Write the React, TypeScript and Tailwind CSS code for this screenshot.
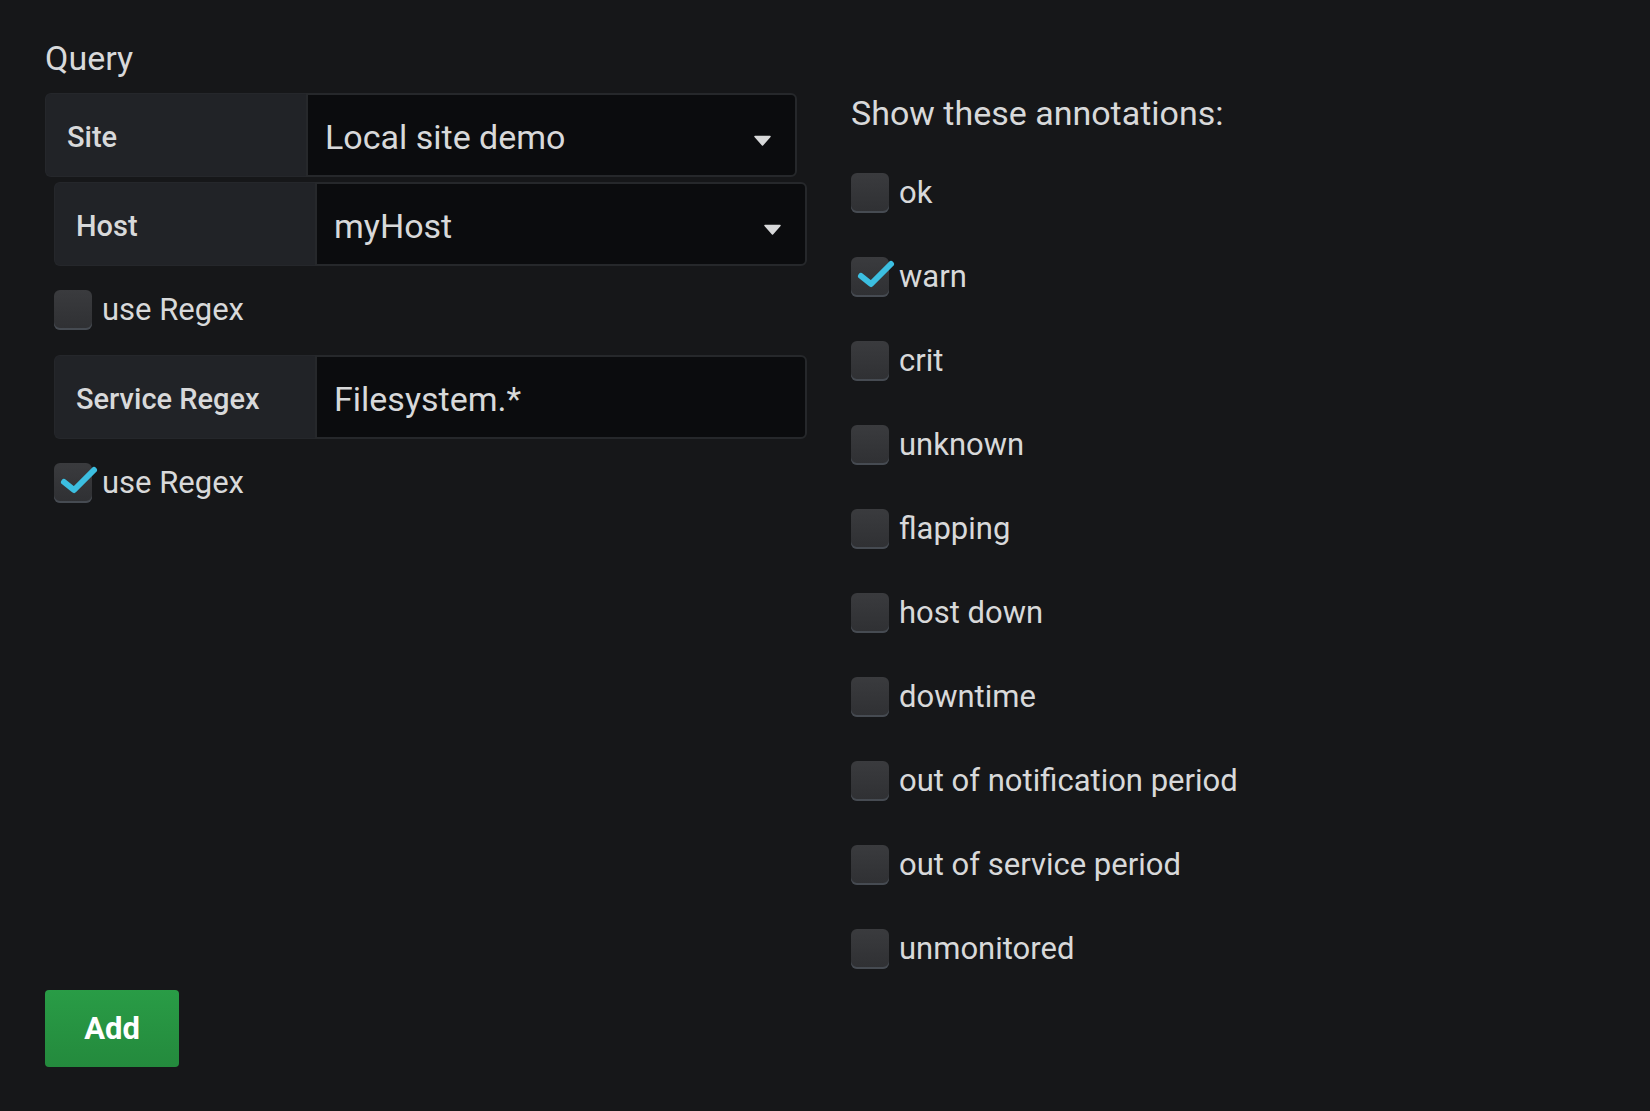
import React from "react";

function Box({ checked }: { checked?: boolean }) {
  return (
    <span className="relative inline-block w-[38px] h-[40px] shrink-0 rounded-[6px] bg-linear-to-b from-[#3a3b3e] to-[#2f3033] shadow-[inset_0_-2px_0_#464b52]">
      {checked && (
        <svg
          className="absolute left-0 top-0 overflow-visible"
          width="38"
          height="40"
          viewBox="0 0 38 40"
        >
          <path
            d="M10 19 L20 27 L40 7"
            stroke="#3cbfe1"
            strokeWidth="6"
            fill="none"
            strokeLinecap="round"
            strokeLinejoin="round"
          />
        </svg>
      )}
    </span>
  );
}

function Check({ label, checked }: { label: string; checked?: boolean }) {
  return (
    <div className="flex items-center h-[40px] gap-[10px]">
      <Box checked={checked} />
      <span className="text-[31px] leading-[40px] text-[#d8d9da]">{label}</span>
    </div>
  );
}

function Caret() {
  return (
    <svg width="17" height="11" viewBox="0 0 17 11" className="mt-[10px]">
      <path d="M1 1.5 L16 1.5 L8.5 10 Z" fill="#d8d9da" stroke="#d8d9da" strokeWidth="1.5" strokeLinejoin="round" />
    </svg>
  );
}

function Row({
  label,
  value,
  select,
  className,
}: {
  label: string;
  value: string;
  select?: boolean;
  className?: string;
}) {
  return (
    <div className={"flex h-[84px] " + (className ?? "")}>
      <div className="w-[261px] shrink-0 h-full flex items-center pl-[21px] pt-[5px] bg-[#212327] rounded-l-[6px] border border-r-0 border-[#25272b] text-[29px] font-medium text-[#d8d9da]">
        {label}
      </div>
      <div className="flex-1 h-full flex items-center justify-between pl-[17px] pr-[24px] bg-[#0b0c0e] rounded-r-[6px] border-2 border-[#26282b] text-[34px] text-[#d8d9da]">
        <span className="pt-[5px]">{value}</span>
        {select && <Caret />}
      </div>
    </div>
  );
}

const annotations: { label: string; checked?: boolean }[] = [
  { label: "ok" },
  { label: "warn", checked: true },
  { label: "crit" },
  { label: "unknown" },
  { label: "flapping" },
  { label: "host down" },
  { label: "downtime" },
  { label: "out of notification period" },
  { label: "out of service period" },
  { label: "unmonitored" },
];

export default function App() {
  return (
    <div className="w-full min-h-[1111px] bg-[#161719] font-['Roboto',sans-serif] pl-[45px] pt-[38px]">
      <div className="flex">
        <div className="w-[762px] shrink-0 flex flex-col">
          <div className="text-[34px] leading-[40px] h-[40px] text-[#d8d9da]">Query</div>
          <Row className="mt-[15px] w-[752px]" label="Site" value="Local site demo" select />
          <Row className="mt-[5px] ml-[9px] w-[753px]" label="Host" value="myHost" select />
          <div className="mt-[24px] ml-[9px]">
            <Check label="use Regex" />
          </div>
          <Row className="mt-[25px] ml-[9px] w-[753px]" label="Service Regex" value="Filesystem.*" />
          <div className="mt-[24px] ml-[9px]">
            <Check label="use Regex" checked />
          </div>
        </div>
        <div className="ml-[44px] flex flex-col">
          <div className="mt-[55px] text-[34px] leading-[40px] h-[40px] text-[#d8d9da]">
            Show these annotations:
          </div>
          <div className="mt-[40px] flex flex-col gap-[44px]">
            {annotations.map((a) => (
              <Check key={a.label} label={a.label} checked={a.checked} />
            ))}
          </div>
        </div>
      </div>
      <button className="mt-[21px] w-[134px] h-[77px] rounded-[4px] bg-linear-to-b from-[#299c46] to-[#248a3d] text-white text-[31px] font-bold flex items-center justify-center pt-[2px]">
        Add
      </button>
    </div>
  );
}
